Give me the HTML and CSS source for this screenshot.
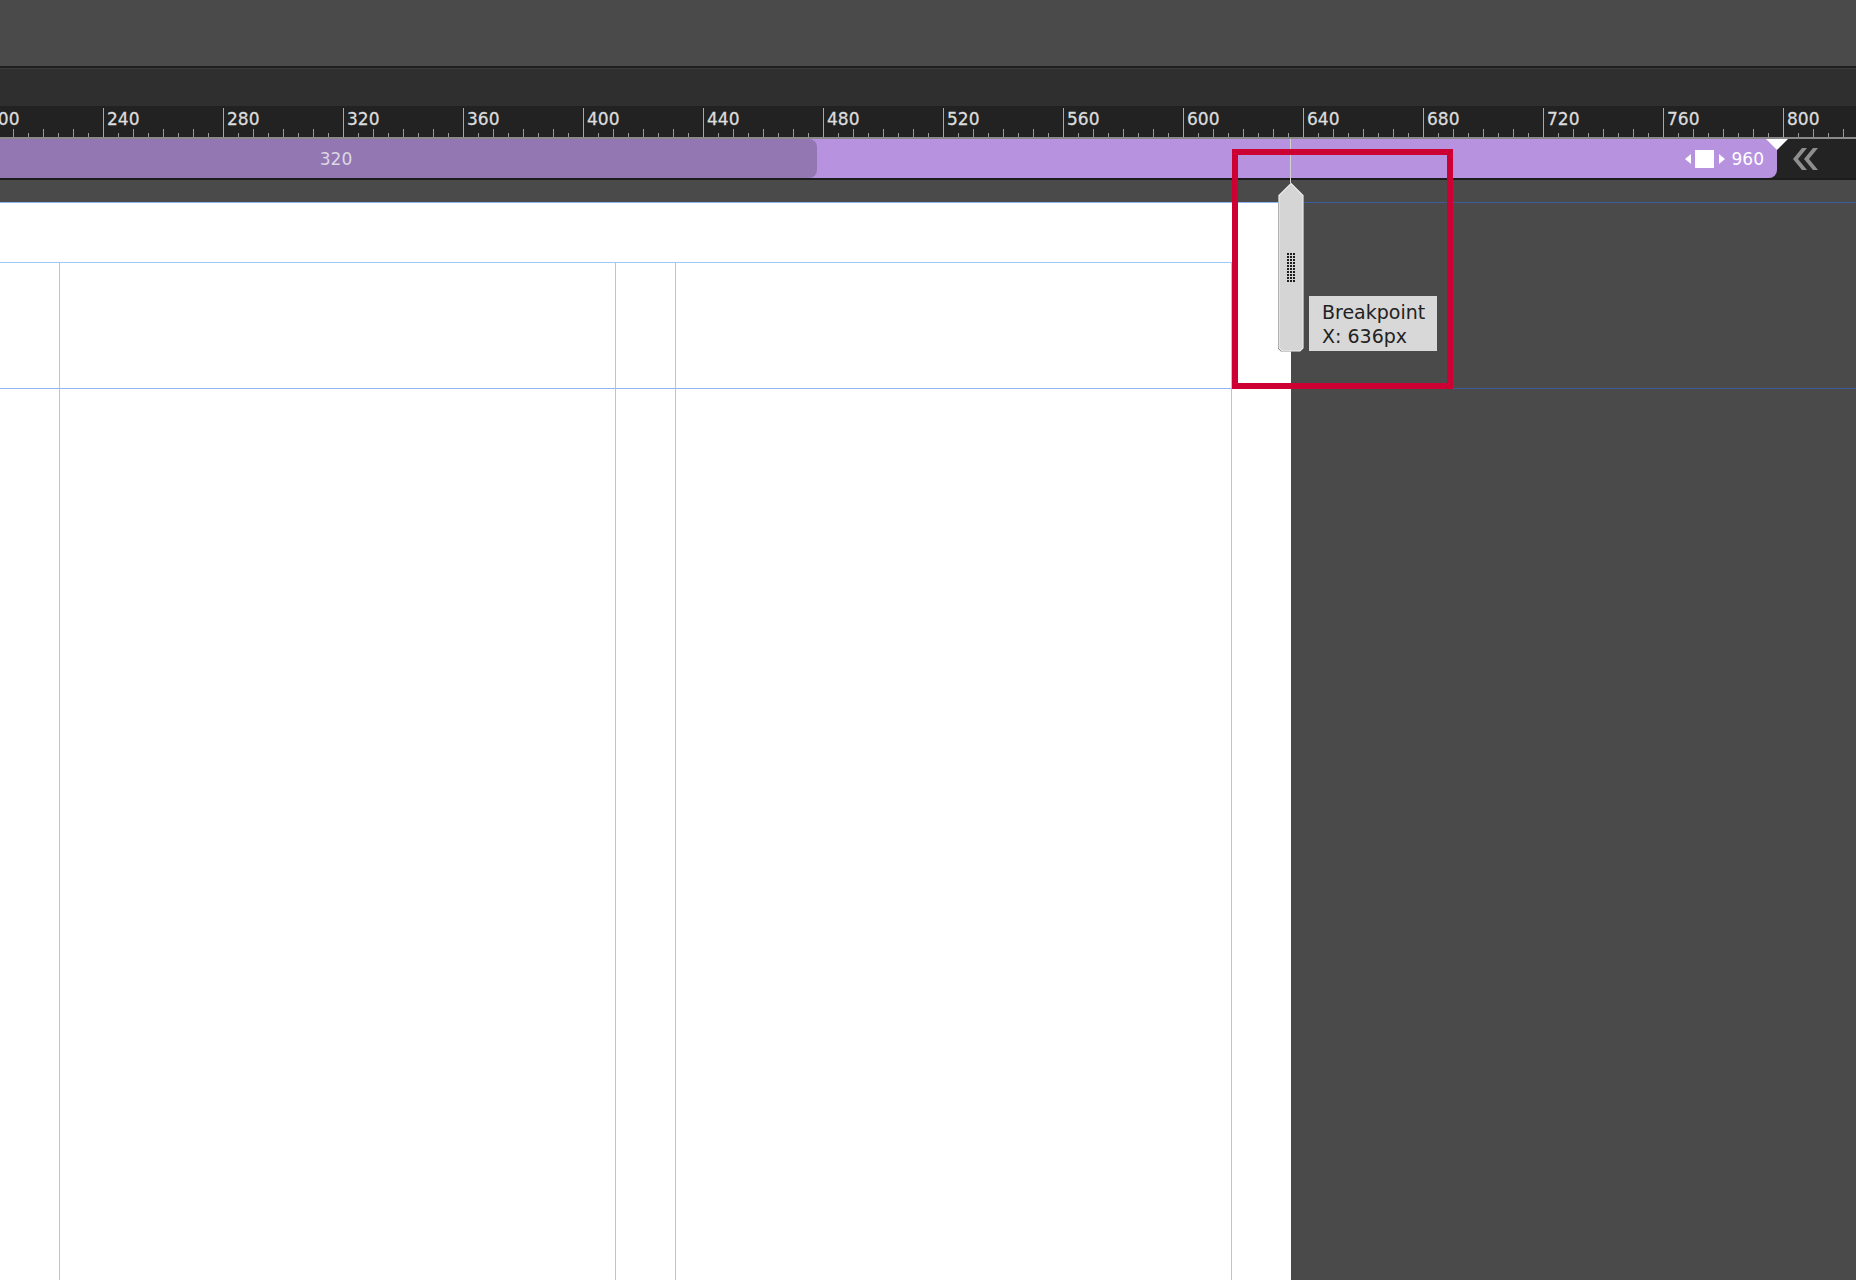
FILE: index.html
```html
<!DOCTYPE html>
<html lang="en">
<head>
    <meta charset="UTF-8">
    <title>Breakpoint</title>
    <link rel="stylesheet" href="styles.css">
</head>
<body>
    <div class="top-bar"></div>
    <div class="toolbar"></div>

    <!-- Ruler -->
    <div class="ruler">
        <div class="ruler-cell first">200</div>
        <div class="ruler-cell">240</div>
        <div class="ruler-cell">280</div>
        <div class="ruler-cell">320</div>
        <div class="ruler-cell">360</div>
        <div class="ruler-cell">400</div>
        <div class="ruler-cell">440</div>
        <div class="ruler-cell">480</div>
        <div class="ruler-cell">520</div>
        <div class="ruler-cell">560</div>
        <div class="ruler-cell">600</div>
        <div class="ruler-cell">640</div>
        <div class="ruler-cell">680</div>
        <div class="ruler-cell">720</div>
        <div class="ruler-cell">760</div>
        <div class="ruler-cell">800</div>
    </div>

    <!-- Media query bar -->
    <div class="mq-bar">
        <div class="mq-light">
            <div class="mq-dark">320</div>
            <div class="mq-spacer"></div>
            <div class="mq-controls">
                <span class="arrow-left"></span>
                <span class="mq-square"></span>
                <span class="arrow-right"></span>
                <span class="mq-value">960</span>
            </div>
        </div>
        <div class="mq-tail">
            <svg width="26" height="22" viewBox="0 0 26 22">
                <polygon points="9,0 14,0 5,11 14,22 9,22 0,11" fill="#8e8e8e"/>
                <polygon points="20,0 25,0 16,11 25,22 20,22 11,11" fill="#8e8e8e"/>
            </svg>
        </div>
    </div>

    <!-- Stage -->
    <div class="stage">
        <div class="stage-gap"></div>
        <div class="canvas">
            <div class="cell page-head"></div>
            <div class="cell off off-head"></div>

            <div class="cell page row2"></div>
            <div class="cell page row2 guide"></div>
            <div class="cell page row2 guide"></div>
            <div class="cell page row2 guide"></div>
            <div class="cell page row2-end guide"></div>
            <div class="cell off"></div>

            <div class="cell page row3"></div>
            <div class="cell page row3 guide"></div>
            <div class="cell page row3 guide"></div>
            <div class="cell page row3 guide"></div>
            <div class="cell page row3 guide"></div>
            <div class="cell off row3-off"></div>
        </div>
    </div>

    <!-- Overlays -->
    <span class="marker"></span>

    <svg class="breakpoint" width="26" height="214" viewBox="0 0 26 214">
        <defs>
            <pattern id="grip" width="3" height="3" patternUnits="userSpaceOnUse">
                <rect width="2" height="2" fill="#1e1e1e"/>
            </pattern>
        </defs>
        <rect x="12" y="0" width="1" height="44" fill="#d2d2d2"/>
        <polygon points="12.5,44 25,56 25,209.5 22,212.5 3,212.5 0,209.5 0,56" fill="#5a5a5a"/>
        <polygon points="13,44.5 25,56.5 25,209 22,212 4,212 1,209 1,56.5" fill="#d5d5d5" stroke="#ececec" stroke-width="1.2"/>
        <rect x="9" y="114" width="8" height="29" fill="url(#grip)"/>
    </svg>

    <div class="tooltip">Breakpoint<br>X: 636px</div>

    <div class="highlight"></div>
</body>
</html>
```

FILE: styles.css
```css
* {
    margin: 0;
    padding: 0;
    box-sizing: border-box;
}

body {
    width: 1856px;
    height: 1280px;
    overflow: hidden;
    position: relative;
    display: flex;
    flex-direction: column;
    background: #4a4a4a;
    font-family: 'DejaVu Sans', sans-serif;
}

.top-bar {
    height: 66px;
    background: #4a4a4a;
    flex: none;
}

.toolbar {
    height: 40px;
    flex: none;
    background: #2f2f2f;
    border-top: 2px solid #1e1e1e;
    box-shadow: inset 0 1px 0 #3a3a3a;
}

/* ruler */
.ruler {
    height: 33px;
    flex: none;
    display: flex;
    overflow: hidden;
    background: #222222;
    border-bottom: 2px solid #8a8a8a;
    padding-top: 2px;
}

.ruler-cell {
    flex: none;
    width: 120px;
    height: 29px;
    border-left: 1px solid #a8a8a8;
    padding-left: 3px;
    padding-top: 1px;
    color: #dcdcdc;
    font-size: 17px;
    line-height: 20px;
    -webkit-text-stroke: 0.3px #dcdcdc;
    background-image:
        linear-gradient(to right, #9a9a9a 1px, transparent 1px),
        linear-gradient(to right, #9a9a9a 1px, transparent 1px);
    background-size: 30px 8px, 15px 4px;
    background-position: -1px bottom, -1px bottom;
    background-repeat: repeat-x;
}

.ruler-cell.first {
    margin-left: -17px;
}

/* media query bar */
.mq-bar {
    height: 41px;
    flex: none;
    display: flex;
    background: #232323;
    border-bottom: 2px solid #1c1c1c;
}

.mq-light {
    width: 1777px;
    flex: none;
    display: flex;
    align-items: stretch;
    background: #b792df;
    border-bottom-right-radius: 8px;
}

.mq-dark {
    width: 962px;
    margin-left: -145px;
    flex: none;
    background: #9277b3;
    border-radius: 0 8px 8px 0;
    color: #dcd8e2;
    font-size: 17px;
    text-align: center;
    line-height: 40px;
}

.mq-spacer {
    flex: 1;
}

.mq-controls {
    display: flex;
    align-items: center;
    padding-right: 13px;
}

.arrow-left {
    width: 0;
    height: 0;
    border-top: 5px solid transparent;
    border-bottom: 5px solid transparent;
    border-right: 6px solid #ffffff;
    margin-right: 4px;
}

.mq-square {
    width: 19px;
    height: 18px;
    background: #ffffff;
    margin-right: 5px;
}

.arrow-right {
    width: 0;
    height: 0;
    border-top: 5px solid transparent;
    border-bottom: 5px solid transparent;
    border-left: 6px solid #ffffff;
    margin-right: 7px;
}

.mq-value {
    color: #ffffff;
    font-size: 17px;
}

.mq-tail {
    flex: 1;
    display: flex;
    align-items: center;
    padding-left: 16px;
}

.mq-tail svg {
    display: block;
}

/* stage */
.stage {
    flex: 1;
    display: flex;
    flex-direction: column;
}

.stage-gap {
    height: 22px;
    flex: none;
}

.canvas {
    flex: 1;
    display: grid;
    grid-template-columns: 59px 556px 60px 556px 60px 1fr;
    grid-template-rows: 60px 126px 1fr;
}

.cell {
    min-height: 0;
}

.page,
.page-head {
    background: #ffffff;
}

.off {
    background: #4a4a4a;
}

.page-head {
    grid-column: 1 / 6;
    border-top: 1px solid #8fb6f2;
}

.off-head {
    border-top: 1px solid #3c5a9c;
}

.row2 {
    border-top: 1px solid #9fc9fa;
}

.guide {
    border-left: 1px solid #9fcbfb;
}

.row3 {
    border-top: 1px solid #8fb6f2;
}

.row3-off {
    border-top: 1px solid #3c5a9c;
}

/* overlays */
.marker {
    position: absolute;
    left: 1766px;
    top: 139px;
    width: 0;
    height: 0;
    border-left: 11px solid transparent;
    border-right: 11px solid transparent;
    border-top: 11px solid #ffffff;
}

.breakpoint {
    position: absolute;
    left: 1278px;
    top: 139px;
}

.tooltip {
    position: absolute;
    left: 1309px;
    top: 296px;
    padding: 4px 12px 3px 13px;
    background: #d8d8d8;
    color: #222222;
    font-size: 19px;
    line-height: 24px;
}

.highlight {
    position: absolute;
    left: 1232px;
    top: 149px;
    width: 221px;
    height: 240px;
    border: 6px solid #cc0033;
}
```
